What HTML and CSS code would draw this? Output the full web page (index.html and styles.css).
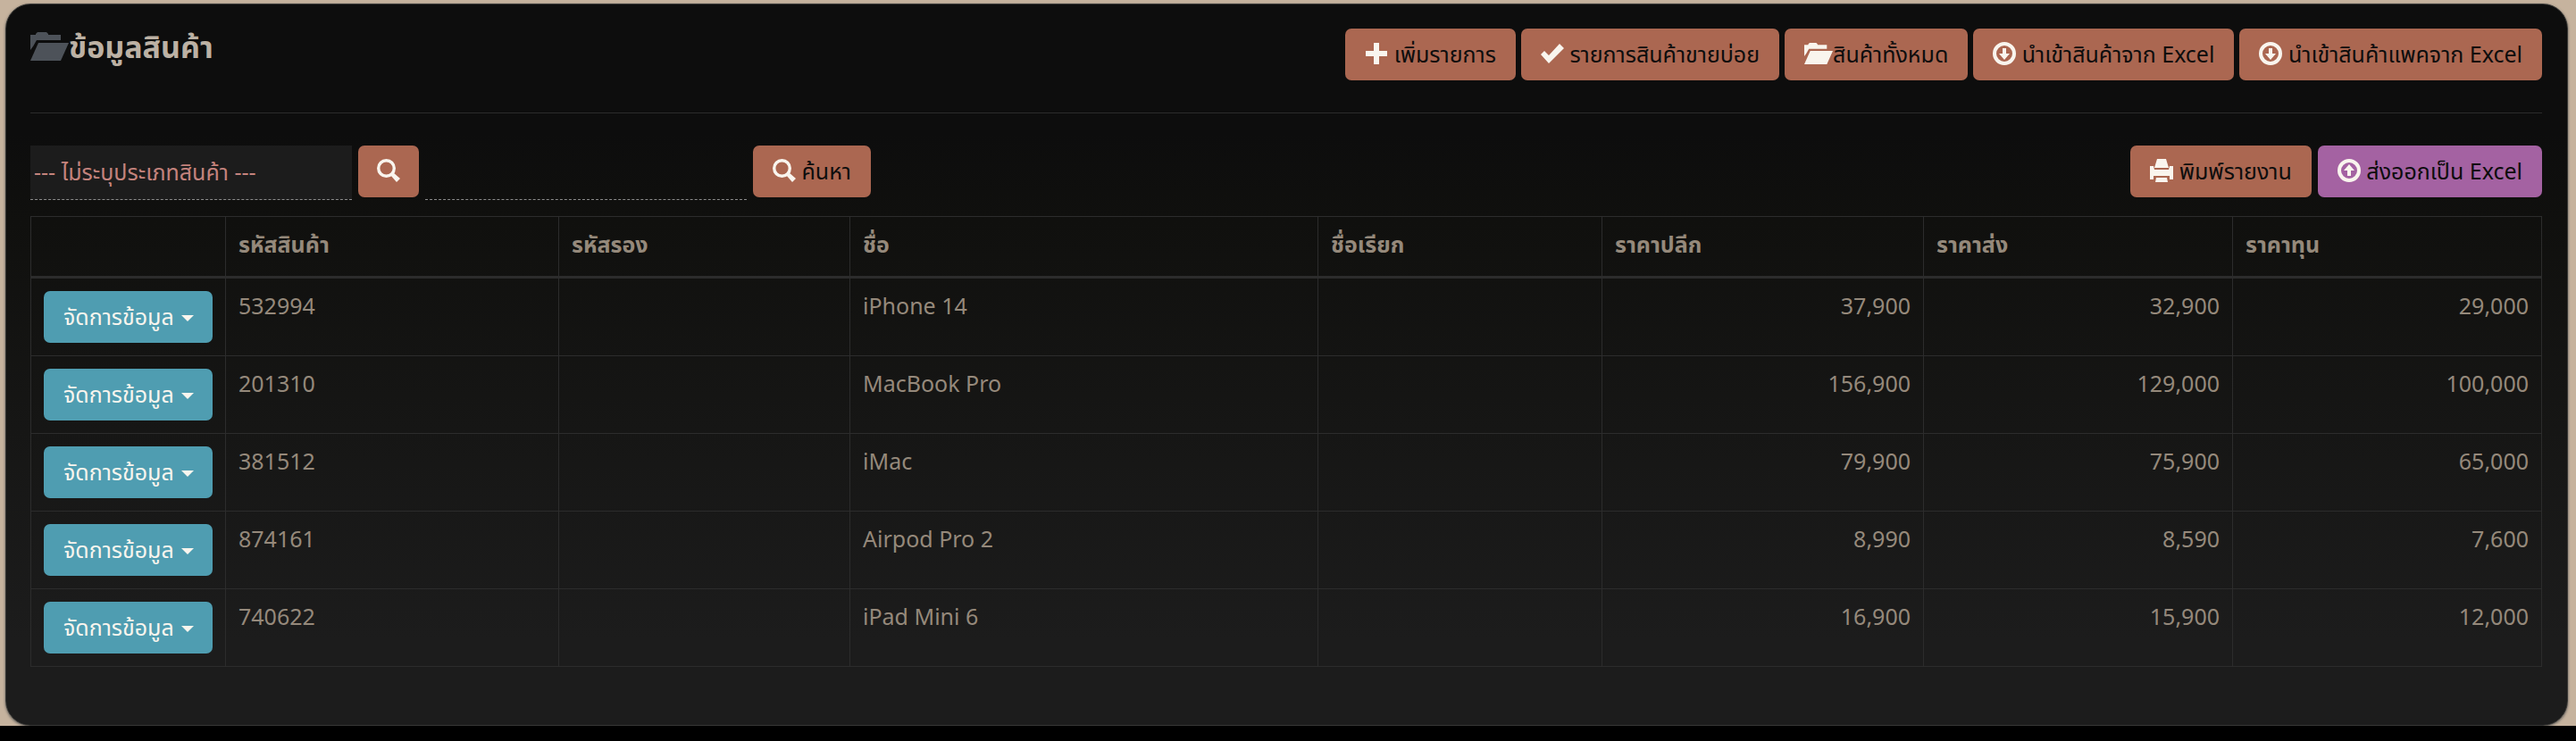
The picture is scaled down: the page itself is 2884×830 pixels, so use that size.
FILE: index.html
```html
<!DOCTYPE html>
<html lang="th">
<head>
<meta charset="utf-8">
<title>ข้อมูลสินค้า</title>
<link rel="stylesheet" href="styles.css">
</head>
<body>
<svg class="sprite" aria-hidden="true">
  <symbol id="folder" viewBox="0 0 43 32"><path d="M0 3h6V2l2-2h10l2 2v1h14v6H7L3 16l-3 4z"/><path d="M9 12h34l-9 20H0z"/></symbol>
  <symbol id="plus" viewBox="0 0 26 26"><path d="M10 1h6v9h9v6h-9v9h-6v-9H1v-6h9z"/></symbol>
  <symbol id="check" viewBox="0 0 26 26"><path d="M21 2l5 5L9 24 0 14l4-4 5 5z"/></symbol>
  <symbol id="down" viewBox="0 0 26 26"><circle cx="13" cy="13" r="11" fill="none" stroke="currentColor" stroke-width="4"/><path d="M11 7h4v6h4l-6 7-6-7h4z"/></symbol>
  <symbol id="up" viewBox="0 0 26 26"><circle cx="13" cy="13" r="11" fill="none" stroke="currentColor" stroke-width="4"/><path d="M11 19h4v-6h4l-6-7-6 7h4z"/></symbol>
  <symbol id="search" viewBox="0 0 26 26"><circle cx="10.500" cy="10.500" r="8.800" fill="none" stroke="currentColor" stroke-width="3.400"/><path d="M18 15l8 7-4 4-7-8z"/></symbol>
  <symbol id="print" viewBox="0 0 26 26"><path d="M8 0h10l3 10H5zM0 8h4l1 4h16l1-4h4v15h-4v-4H4v4H0zM7 21h12l1 5H6z"/></symbol>
</svg>
<main class="panel">
  <header class="bar head">
    <h1 class="title"><svg class="folder"><use href="#folder"/></svg>ข้อมูลสินค้า</h1>
    <nav class="group">
      <button class="btn"><svg class="icon"><use href="#plus"/></svg> เพิ่มรายการ</button>
      <button class="btn"><svg class="icon"><use href="#check"/></svg> รายการสินค้าขายบ่อย</button>
      <button class="btn"><svg class="icon wide"><use href="#folder"/></svg>สินค้าทั้งหมด</button>
      <button class="btn"><svg class="icon"><use href="#down"/></svg> นำเข้าสินค้าจาก Excel</button>
      <button class="btn"><svg class="icon"><use href="#down"/></svg> นำเข้าสินค้าแพคจาก Excel</button>
    </nav>
  </header>
  <div class="bar filters">
    <form class="group">
      <select class="field category" aria-label="ประเภทสินค้า"><option>--- ไม่ระบุประเภทสินค้า ---</option></select>
      <button type="button" class="btn square" aria-label="ค้นหาประเภท"><svg class="icon"><use href="#search"/></svg></button>
      <input class="field" type="text" aria-label="คำค้นหา">
      <button type="button" class="btn"><svg class="icon"><use href="#search"/></svg> ค้นหา</button>
    </form>
    <div class="group">
      <button class="btn"><svg class="icon"><use href="#print"/></svg> พิมพ์รายงาน</button>
      <button class="btn purple"><svg class="icon"><use href="#up"/></svg> ส่งออกเป็น Excel</button>
    </div>
  </div>
  <table class="products">
    <colgroup><col class="c-act"><col class="c-code"><col class="c-alt"><col class="c-name"><col class="c-call"><col class="c-retail"><col class="c-whole"><col class="c-cost"></colgroup>
    <thead><tr><th></th><th>รหัสสินค้า</th><th>รหัสรอง</th><th>ชื่อ</th><th>ชื่อเรียก</th><th>ราคาปลีก</th><th>ราคาส่ง</th><th>ราคาทุน</th></tr></thead>
    <tbody>
      <tr><td class="act"><button class="btn manage">จัดการข้อมูล<span class="caret"></span></button></td><td>532994</td><td></td><td>iPhone 14</td><td></td><td class="num">37,900</td><td class="num">32,900</td><td class="num">29,000</td></tr>
      <tr><td class="act"><button class="btn manage">จัดการข้อมูล<span class="caret"></span></button></td><td>201310</td><td></td><td>MacBook Pro</td><td></td><td class="num">156,900</td><td class="num">129,000</td><td class="num">100,000</td></tr>
      <tr><td class="act"><button class="btn manage">จัดการข้อมูล<span class="caret"></span></button></td><td>381512</td><td></td><td>iMac</td><td></td><td class="num">79,900</td><td class="num">75,900</td><td class="num">65,000</td></tr>
      <tr><td class="act"><button class="btn manage">จัดการข้อมูล<span class="caret"></span></button></td><td>874161</td><td></td><td>Airpod Pro 2</td><td></td><td class="num">8,990</td><td class="num">8,590</td><td class="num">7,600</td></tr>
      <tr><td class="act"><button class="btn manage">จัดการข้อมูล<span class="caret"></span></button></td><td>740622</td><td></td><td>iPad Mini 6</td><td></td><td class="num">16,900</td><td class="num">15,900</td><td class="num">12,000</td></tr>
    </tbody>
  </table>
</main>
</body>
</html>
```

FILE: styles.css
```css
* { box-sizing: border-box; }
html { background: #000; }
body {
  margin: 0;
  padding: 4px 9px 0 6px;
  background: linear-gradient(#c6b39e, #c6b39e) no-repeat;
  font: 25px/36px "Noto Sans", "Noto Sans Thai", sans-serif;
  color: #95897b;
}
.sprite { position: absolute; width: 0; height: 0; }
.panel {
  padding: 27px 28px 65px 27px;
  border: 1px solid #373735;
  border-radius: 28px;
  background: linear-gradient(#0d0d0d 0%, #0d0d0d 18%, #10100e 30%, #1c1c1c 88%, #1c1c1c);
  box-shadow: 0 1px 3px #555;
}
.bar { display: flex; justify-content: space-between; align-items: flex-start; }
.head { padding-bottom: 36px; border-bottom: 1px solid #2c2c2c; }
.filters { padding: 36px 0 18px; }
.group { display: flex; gap: 7px; align-items: flex-start; margin: 0; }
.head .group { gap: 6px; }
.title {
  display: flex;
  align-items: center;
  margin: 0;
  font-size: 34px;
  line-height: 40px;
  color: #bcb1a4;
}
.folder { width: 43px; height: 32px; fill: #4d5259; }
.btn {
  height: 58px;
  padding: 0 22px 2px;
  border: 0;
  border-radius: 7px;
  background: #ab6751;
  color: #0d0d0d;
  font: inherit;
  line-height: 56px;
  white-space: nowrap;
}
.icon { width: 26px; height: 26px; color: #f9f5ee; fill: currentColor; vertical-align: -3px; }
.wide { width: 32px; }
.square { width: 68px; padding: 0 0 2px; }
.purple { background: #a462a2; }
.field {
  width: 360px;
  height: 61px;
  padding: 0 4px 2px;
  border: 0;
  border-bottom: 1px dashed #8c8c8c;
  border-radius: 0;
  background: transparent;
  color: #c4837d;
  font: inherit;
  appearance: none;
}
.category { background: #1c1c1c; }
.products { width: 100%; border-collapse: collapse; table-layout: fixed; }
.products th, .products td { border: 1px solid #2c2c2c; padding: 12px 14px; vertical-align: top; }
.products th { height: 68px; text-align: left; border-bottom: 3px solid #2c2c2c; }
.products .act { padding: 14px; line-height: 0; }
.products .num { text-align: right; }
.c-act { width: 218px; }
.c-code { width: 373px; }
.c-alt { width: 326px; }
.c-name { width: 524px; }
.c-call { width: 318px; }
.c-retail { width: 360px; }
.c-whole { width: 346px; }
.manage { width: 100%; background: #4f9db1; color: #f9f5ee; text-align: left; }
.caret {
  display: inline-block;
  margin-left: 8px;
  border-top: 7px solid;
  border-left: 7px solid transparent;
  border-right: 7px solid transparent;
  vertical-align: 4px;
}
```
